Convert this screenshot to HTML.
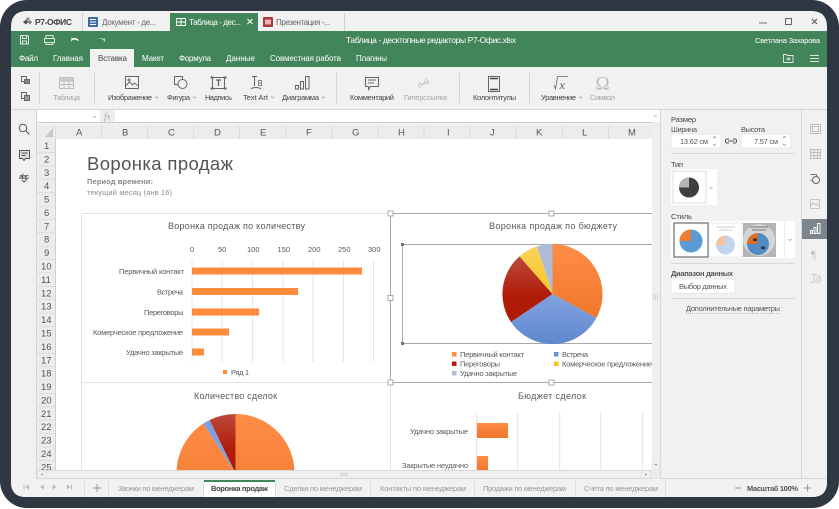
<!DOCTYPE html>
<html><head><meta charset="utf-8"><style>
html,body{margin:0;padding:0;width:839px;height:509px;background:#fff;overflow:hidden}
svg{display:block;filter:blur(.38px)}
text{font-family:"Liberation Sans",sans-serif;font-size:8px;fill:#444}
.w{fill:#fff}.g{fill:#a5a5a5}.c{fill:#595959}.s{fill:#8c8c8c}
.ic{fill:none;stroke:#666;stroke-width:1}
</style></head><body>
<svg width="839" height="509" viewBox="0 0 839 509" xmlns="http://www.w3.org/2000/svg">
<defs>
<clipPath id="win"><path d="M27 11H811Q827 11 827 27V482Q827 497 812 497H26Q11 497 11 482V27Q11 11 27 11Z"/></clipPath>
<clipPath id="sheet"><rect x="37" y="139" width="615" height="331"/></clipPath>
<linearGradient id="or" x1="0" y1="0" x2="0" y2="1"><stop offset="0" stop-color="#ff8d47"/><stop offset="1" stop-color="#f0762a"/></linearGradient>
<linearGradient id="bl" x1="0" y1="0" x2="0" y2="1"><stop offset="0" stop-color="#82a3e0"/><stop offset="1" stop-color="#5f88cf"/></linearGradient>
<linearGradient id="rd" x1="0" y1="0" x2="0" y2="1"><stop offset="0" stop-color="#bd4a3e"/><stop offset=".6" stop-color="#b01c08"/><stop offset="1" stop-color="#ad1a06"/></linearGradient>
<linearGradient id="yl" x1="0" y1="0" x2="0" y2="1"><stop offset="0" stop-color="#fad35c"/><stop offset="1" stop-color="#f9c51c"/></linearGradient>
</defs>
<rect width="839" height="509" fill="#fff"/>
<rect x="0" y="0" width="839" height="508" rx="27" fill="#2f3742"/>
<g clip-path="url(#win)">
<rect x="11" y="11" width="816" height="486" fill="#f1f1f1"/>
<!-- title bar -->
<g fill="#555"><path d="M26 19.500l2.500 2.500-2.500 2.500-3-2.500z"/><path d="M30 20l2 2-2 2.500-2-2.500z" fill="#777"/><path d="M28 17l2 2-2 2-2-2z" fill="#888"/></g>
<text x="35" y="25" textLength="37" style="font-weight:bold;font-size:8.500px" fill="#444">Р7-ОФИС</text>
<path d="M82.500 13v18M344.500 13v18" stroke="#d0d0d0"/>
<rect x="88" y="17" width="10" height="10" rx="1" fill="#3e6aa6"/><path d="M90 19.500h6M90 22h6M90 24.500h6" stroke="#fff"/>
<text x="102" y="25" textLength="54" style="fill:#666">Документ - де...</text>
<rect x="170" y="13" width="88" height="18" fill="#43855a"/>
<path d="M176.500 18.500h9v7h-9zM176.500 22h9M181 18.500v7" fill="none" stroke="#fff" stroke-width=".9"/>
<text x="189" y="25" textLength="52" class="w">Таблица - дес...</text>
<path d="M247.500 19l5 5M252.500 19l-5 5" stroke="#fff"/>
<rect x="263" y="17" width="10" height="10" rx="1" fill="#a83a3a"/><rect x="265" y="19.500" width="6" height="5" fill="#e8b8b8"/>
<text x="276" y="25" textLength="54" style="fill:#666">Презентация -...</text>
<path d="M759 23h8" stroke="#777"/><rect x="785.500" y="18.500" width="6" height="6" fill="none" stroke="#666"/><path d="M812 19l5 5M817 19l-5 5" stroke="#555"/>
<!-- green -->
<rect x="11" y="31" width="816" height="36" fill="#43855a"/>
<g fill="none" stroke="#d9e8de">
<path d="M20.500 35.500h7l1 1v7.500h-8zM22.500 35.500v3h4v-3M22.500 44v-3h4v3"/>
<path d="M46 38v-2.500h7V38M44.500 38.500h10v4h-10zM46 42v2.500h7V42"/>
</g>
<path d="M71 42c1-3 5-3 7-1l1-.5c-2-3-5-3-6-2l-1.500-1z" fill="#fff"/>
<path d="M104 41c-1-2-4-3-7-2 2-1 5-1 7 0l1-1v4z" fill="#cfe2d6"/>
<text x="346" y="43" textLength="170" class="w" style="font-size:8.500px">Таблица - десктопные редакторы Р7-Офис.xlsx</text>
<text x="755" y="43" textLength="65" class="w" style="font-size:7.500px">Светлана Захарова</text>
<g class="w">
<text x="19" y="61" textLength="19" class="w">Файл</text>
<text x="53" y="61" textLength="30" class="w">Главная</text>
<text x="142" y="61" textLength="22" class="w">Макет</text>
<text x="179" y="61" textLength="32" class="w">Формула</text>
<text x="226" y="61" textLength="29" class="w">Данные</text>
<text x="270" y="61" textLength="71" class="w">Совместная работа</text>
<text x="356" y="61" textLength="31" class="w">Плагины</text>
</g>
<rect x="90" y="49" width="44" height="18" fill="#f1f1f1"/>
<text x="98" y="61" textLength="29" style="fill:#444">Вставка</text>
<path d="M783.500 54.500h3l1 1h5.500v7h-9.500zM786 59h4M788.500 57.500l1.500 1.500-1.500 1.500" fill="none" stroke="#dcebe1" stroke-width=".9"/>
<path d="M810 55.500h9M810 58.500h9M810 61.500h9" stroke="#dcebe1"/>
<!-- toolbar -->
<rect x="11" y="67" width="816" height="42" fill="#f1f1f1"/>
<path d="M11 109.500H827" stroke="#d4d4d4"/>
<path d="M39.500 73v30M94.500 73v30M336.500 73v30M459.500 73v30M529.500 73v30" stroke="#d5d5d5"/>
<g fill="none" stroke="#666">
<path d="M21.500 76.500h5v5h-5z"/><path d="M24.500 79.500h5v4h-5z" fill="#888"/>
<path d="M21.500 92.500h5v6h-5z"/><path d="M24.500 95.500h5v5h-5z" fill="#999"/>
</g>
<g fill="none" stroke="#bbb"><path d="M59.500 77.500h14v11h-14zM59.500 81h14M59.500 84.500h14M64 81v7.500M69 81v7.500"/></g>
<path d="M59.500 77.500h14v3h-14z" fill="#ccc"/>
<text x="53" y="100" textLength="27" class="g" style="font-size:7.500px">Таблица</text>
<g class="ic">
<path d="M125.500 76.500h13v12h-13zM125.500 86l4-4 3 3 2-2 4 3"/><circle cx="129" cy="80" r="1"/>
<path d="M174.500 76.500h8v6M174.500 76.500v8h4"/><circle cx="182.500" cy="84" r="4.500" fill="#f1f1f1"/>
<path d="M212.500 77.500h12v11h-12z"/>
<path d="M216 80h5M218.500 80v6" stroke-width="1.300"/>
<path d="M252 76.500h5M254.500 76.500v9.500M251 89c2-2 8-2 10 0"/><path d="M258.500 80.500h3v5h-3zM258.500 83h3" stroke-width=".8"/>
<path d="M295.500 85.500h3v3.500h-3zM300.500 81.500h3v7.500h-3zM305.500 76.500h3.500v12.500h-3.500z"/>
<path d="M365.500 77.500h13v9h-8l-2 3v-3h-3zM368 80h8M368 83h6"/>
<path d="M488.500 76.500h11v15h-11z"/>
</g>
<path d="M210.500 76.500h3v2h-3zM223.500 76.500h3v2h-3zM210.500 87.500h3v2h-3zM223.500 87.500h3v2h-3z" fill="#666"/>
<path d="M490 78.500h8M490 89.500h8" stroke="#444" stroke-width="1.600"/>
<path d="M421 88l-2-2c-1-1 0-3 1-3l3 3M425 78l3 3c1 1 0 2-1 3l-3-3M422 85l4-4" fill="none" stroke="#c4c4c4"/>
<text x="559.500" y="89" style="font-family:'Liberation Serif',serif;font-size:12px;font-style:italic;fill:#555">x</text>
<path d="M554 85l1.500 4 2-12.500h10.500" fill="none" stroke="#666" stroke-width=".8"/>
<text x="595.500" y="89.500" textLength="15" style="font-family:'Liberation Serif',serif;font-size:19px;fill:#bbb">Ω</text>
<text x="108" y="100" textLength="44" style="font-size:7.500px">Изображение</text>
<text x="167" y="100" textLength="23" style="font-size:7.500px">Фигура</text>
<text x="205" y="100" textLength="27" style="font-size:7.500px">Надпись</text>
<text x="243" y="100" textLength="25" style="font-size:7.500px">Text Art</text>
<text x="282" y="100" textLength="37" style="font-size:7.500px">Диаграмма</text>
<text x="350" y="100" textLength="44" style="font-size:7.500px">Комментарий</text>
<text x="404" y="100" textLength="43" class="g" style="font-size:7.500px">Гиперссылка</text>
<text x="473" y="100" textLength="43" style="font-size:7.500px">Колонтитулы</text>
<text x="541" y="100" textLength="35" style="font-size:7.500px">Уравнение</text>
<text x="590" y="100" textLength="25" class="g" style="font-size:7.500px">Символ</text>
<path d="M155 96.500l1.500 1.500 1.500-1.500M193 96.500l1.500 1.500 1.500-1.500M271 96.500l1.500 1.500 1.500-1.500M322 96.500l1.500 1.500 1.500-1.500M579 96.500l1.500 1.500 1.500-1.500" fill="none" stroke="#999" stroke-width=".7"/>
<!-- formula -->
<rect x="37" y="110" width="623" height="12" fill="#fff"/>
<rect x="100" y="110" width="15" height="12" fill="#ececec"/>
<text x="104" y="119.500" style="font-family:'Liberation Serif',serif;font-style:italic;font-size:9px;fill:#aaa">fx</text>
<path d="M93 116l1.500 1.500 1.500-1.500M654 115l1.500 1.500 1.500-1.500" fill="none" stroke="#aaa" stroke-width=".7"/>
<rect x="37" y="122" width="623" height="4" fill="#efefef"/>
<path d="M37 122.500h623" stroke="#cfcfcf"/>
<!-- sidebar left -->
<path d="M36.500 109v370" stroke="#d4d4d4"/>
<g fill="none" stroke="#555"><circle cx="23" cy="128" r="3.700"/><path d="M26 131l3.500 3.500" stroke-width="1.100"/></g>
<path d="M19.500 150.500h10v8h-4l-1.500 2-1.500-2h-3z" fill="#ddd" stroke="#555"/><path d="M21.500 153h6M21.500 155.500h4" stroke="#555"/>
<text x="19" y="179" textLength="10" style="font-size:7px;font-weight:bold;fill:#555">abc</text><path d="M22 180l2 2 3-3" fill="none" stroke="#555"/>
<!-- col headers -->
<rect x="37" y="126" width="615" height="13" fill="#ececec"/>
<path d="M37 139.500h615" stroke="#d8d8d8"/>
<path d="M53 128v9h-8z" fill="#c9c9c9"/>
<path d="M55.500 126v13M101.500 126v13M147.500 126v13M193.500 126v13M239.500 126v13M286 126v13M332 126v13M378 126v13M424 126v13M470 126v13M516 126v13M562.500 126v13M608.500 126v13" stroke="#dcdcdc"/>
<text x="76" y="135.500" style="font-size:9.500px;fill:#555">A</text><text x="122" y="135.500" style="font-size:9.500px;fill:#555">B</text><text x="168" y="135.500" style="font-size:9.500px;fill:#555">C</text><text x="214" y="135.500" style="font-size:9.500px;fill:#555">D</text><text x="260" y="135.500" style="font-size:9.500px;fill:#555">E</text><text x="306" y="135.500" style="font-size:9.500px;fill:#555">F</text><text x="352" y="135.500" style="font-size:9.500px;fill:#555">G</text><text x="398" y="135.500" style="font-size:9.500px;fill:#555">H</text><text x="447" y="135.500" style="font-size:9.500px;fill:#555">I</text><text x="490" y="135.500" style="font-size:9.500px;fill:#555">J</text><text x="536" y="135.500" style="font-size:9.500px;fill:#555">K</text><text x="582" y="135.500" style="font-size:9.500px;fill:#555">L</text><text x="628" y="135.500" style="font-size:9.500px;fill:#555">M</text>
<!-- sheet -->
<g clip-path="url(#sheet)">
<rect x="55" y="139" width="597" height="331" fill="#fff"/>
<rect x="37" y="139" width="18.500" height="331" fill="#ececec"/>
<path d="M55.500 139v331" stroke="#d0d0d0"/>
<path d="M37 152.400h18M37 165.800h18M37 179.200h18M37 192.600h18M37 206h18M37 219.300h18M37 232.700h18M37 246.100h18M37 259.500h18M37 272.900h18M37 286.300h18M37 299.700h18M37 313.100h18M37 326.500h18M37 339.900h18M37 353.300h18M37 366.600h18M37 380h18M37 393.400h18M37 406.800h18M37 420.200h18M37 433.600h18M37 447h18M37 460.400h18" stroke="#dadada" stroke-width=".8"/>
<text x="44" y="149" style="font-size:9.500px;fill:#555">1</text><text x="44" y="162.400" style="font-size:9.500px;fill:#555">2</text><text x="44" y="175.800" style="font-size:9.500px;fill:#555">3</text><text x="44" y="189.200" style="font-size:9.500px;fill:#555">4</text><text x="44" y="202.600" style="font-size:9.500px;fill:#555">5</text><text x="44" y="216" style="font-size:9.500px;fill:#555">6</text><text x="44" y="229.400" style="font-size:9.500px;fill:#555">7</text><text x="44" y="242.700" style="font-size:9.500px;fill:#555">8</text><text x="44" y="256.100" style="font-size:9.500px;fill:#555">9</text>
<text x="41" y="269.500" style="font-size:9.500px;fill:#555">10</text><text x="41" y="282.900" style="font-size:9.500px;fill:#555">11</text><text x="41" y="296.300" style="font-size:9.500px;fill:#555">12</text><text x="41" y="309.700" style="font-size:9.500px;fill:#555">13</text><text x="41" y="323.100" style="font-size:9.500px;fill:#555">14</text><text x="41" y="336.500" style="font-size:9.500px;fill:#555">15</text><text x="41" y="349.900" style="font-size:9.500px;fill:#555">16</text><text x="41" y="363.300" style="font-size:9.500px;fill:#555">17</text><text x="41" y="376.600" style="font-size:9.500px;fill:#555">18</text><text x="41" y="390" style="font-size:9.500px;fill:#555">19</text><text x="41" y="403.400" style="font-size:9.500px;fill:#555">20</text><text x="41" y="416.800" style="font-size:9.500px;fill:#555">21</text><text x="41" y="430.200" style="font-size:9.500px;fill:#555">22</text><text x="41" y="443.600" style="font-size:9.500px;fill:#555">23</text><text x="41" y="457" style="font-size:9.500px;fill:#555">24</text><text x="41" y="470.400" style="font-size:9.500px;fill:#555">25</text>
<text x="87" y="170" textLength="146" style="font-size:18.500px;fill:#555">Воронка продаж</text>
<text x="87" y="184" textLength="66" style="font-size:7.500px;font-weight:bold;fill:#888">Период времени:</text>
<text x="87" y="195" textLength="85" style="font-size:7.500px;fill:#8c8c8c">текущий месяц (янв 16)</text>
<!-- chart borders -->
<path d="M81.500 470V213.500H390M81.500 382.500H652M390.500 382v88" fill="none" stroke="#e3e3e3"/>
<!-- chart 1 -->
<text x="168" y="229" textLength="137" style="font-size:9px;fill:#595959">Воронка продаж по количеству</text>
<text x="190" y="252" class="c" style="font-size:7.500px">0</text><text x="218" y="252" class="c" style="font-size:7.500px">50</text><text x="247" y="252" class="c" style="font-size:7.500px">100</text><text x="277.500" y="252" class="c" style="font-size:7.500px">150</text><text x="308" y="252" class="c" style="font-size:7.500px">200</text><text x="338" y="252" class="c" style="font-size:7.500px">250</text><text x="368" y="252" class="c" style="font-size:7.500px">300</text>
<path d="M192 261v101M222 261v101M252.500 261v101M283 261v101M313 261v101M343.500 261v101M373.500 261v101" stroke="#e6e6e6"/>
<rect x="192" y="267.500" width="170" height="7" fill="#fe8a3c"/>
<rect x="192" y="288" width="106" height="7" fill="#fe8a3c"/>
<rect x="192" y="308.500" width="67" height="7" fill="#fe8a3c"/>
<rect x="192" y="328.500" width="37" height="7" fill="#fe8a3c"/>
<rect x="192" y="348.500" width="12" height="7" fill="#fe8a3c"/>
<text x="119" y="274" textLength="65" class="c" style="font-size:7.500px">Первичный контакт</text>
<text x="157" y="294.500" textLength="26" class="c" style="font-size:7.500px">Встреча</text>
<text x="144" y="315" textLength="39.500" class="c" style="font-size:7.500px">Переговоры</text>
<text x="93" y="335" textLength="90" class="c" style="font-size:7.500px">Комерческое предложение</text>
<text x="126" y="355" textLength="57" class="c" style="font-size:7.500px">Удачно закрытые</text>
<rect x="223" y="370" width="4" height="4" fill="#fe8a3c"/>
<text x="231" y="375" textLength="18" class="c" style="font-size:7.500px">Ряд 1</text>
<!-- chart 2 -->
<text x="489" y="229" textLength="128" style="font-size:9px;fill:#595959">Воронка продаж по бюджету</text>
<path d="M652 244.500H402.500V343.500H652" fill="none" stroke="#a8a8a8"/>
<path d="M552.500 294V244A50 50 0 0 1 596.400 317.900Z" fill="url(#or)"/>
<path d="M552.500 294L596.400 317.900A50 50 0 0 1 511 322Z" fill="url(#bl)"/>
<path d="M552.500 294L511 322A50 50 0 0 1 519.500 256.400Z" fill="url(#rd)"/>
<path d="M552.500 294L519.500 256.400A50 50 0 0 1 537 246.400Z" fill="url(#yl)"/>
<path d="M552.500 294L537 246.400A50 50 0 0 1 552.500 244Z" fill="#aebcd8"/>
<rect x="452" y="352" width="4.500" height="4.500" fill="#fe8a3c"/><rect x="554" y="352" width="4.500" height="4.500" fill="#6a90d4"/>
<rect x="452" y="361.500" width="4.500" height="4.500" fill="#b01c08"/><rect x="554" y="361.500" width="4.500" height="4.500" fill="#f9c51c"/>
<rect x="452" y="371" width="4.500" height="4.500" fill="#aebcd8"/>
<text x="460" y="357" textLength="64" class="c" style="font-size:7.500px">Первичный контакт</text>
<text x="562" y="357" textLength="26" class="c" style="font-size:7.500px">Встреча</text>
<text x="460" y="366.500" textLength="40" class="c" style="font-size:7.500px">Переговоры</text>
<text x="562" y="366.500" textLength="90" class="c" style="font-size:7.500px">Комерческое предложение</text>
<text x="460" y="376" textLength="57" class="c" style="font-size:7.500px">Удачно закрытые</text>
<path d="M390.500 213.500H652M390.500 213.500V382.500M390.500 382.500H652" fill="none" stroke="#a8a8a8"/>
<!-- chart 3 -->
<text x="194" y="399" textLength="83" style="font-size:9px;fill:#595959">Количество сделок</text>
<path d="M235.500 473L203.400 423.500A59 59 0 1 0 235.500 414Z" fill="url(#or)"/>
<path d="M235.500 473L203.400 423.500A59 59 0 0 1 209.600 420Z" fill="#7fa0e0"/>
<path d="M235.500 473L209.600 420A59 59 0 0 1 235.500 414Z" fill="url(#rd)"/>
<!-- chart 4 -->
<text x="518" y="399" textLength="68" style="font-size:9px;fill:#595959">Бюджет сделок</text>
<path d="M476.700 413v57M517.700 413v57M559.700 413v57M600.700 413v57M642.700 413v57" stroke="#e3e3e3"/>
<rect x="477" y="423" width="31" height="15" fill="url(#or)"/>
<rect x="477" y="456" width="11" height="15" fill="url(#or)"/>
<text x="410" y="434" textLength="58" class="c" style="font-size:7.500px">Удачно закрытые</text>
<text x="402" y="468" textLength="66" class="c" style="font-size:7.500px">Закрытые неудачно</text>
<!-- handles -->
<g fill="#fff" stroke="#999" stroke-width=".8">
<rect x="388" y="211" width="5" height="5"/><rect x="549" y="211" width="5" height="5"/><rect x="388" y="295.500" width="5" height="5"/><rect x="388" y="380" width="5" height="5"/><rect x="549" y="380" width="5" height="5"/>
</g>
<rect x="401" y="243" width="3" height="3" fill="#777"/><rect x="401" y="342" width="3" height="3" fill="#777"/>
</g>
<!-- scrollbars -->
<rect x="37" y="470" width="623" height="9" fill="#ececec"/>
<path d="M37 470.500h615M37 478.500h790" stroke="#d8d8d8"/>
<rect x="38" y="471" width="7" height="7" fill="#f3f3f3" stroke="#ddd" stroke-width=".5"/>
<rect x="642" y="471" width="8" height="7" fill="#f3f3f3" stroke="#ddd" stroke-width=".5"/>
<rect x="47" y="471" width="594" height="7" fill="#efefef"/>
<path d="M340 473.500h8M340 475.500h8" stroke="#cfcfcf"/>
<path d="M42.500 473l-2 1.500 2 1.500zM645 473l2 1.500-2 1.500z" fill="#999"/>
<rect x="652" y="122" width="8" height="357" fill="#ececec"/>
<rect x="652.500" y="127" width="7" height="333" fill="#efefef"/>
<path d="M653.500 294v6M655.500 294v6M657.500 294v6" stroke="#d4d4d4"/>
<rect x="652.500" y="461" width="7" height="8" fill="#f3f3f3" stroke="#ddd" stroke-width=".5"/>
<path d="M654 464l2 2 2-2z" fill="#aaa"/>
<!-- right panel -->
<path d="M660.500 110v369M801.500 110v369" stroke="#d8d8d8"/>
<text x="671" y="122" textLength="25" style="font-size:7.500px">Размер</text>
<text x="671" y="132" textLength="26" style="font-size:7.500px;fill:#555">Ширина</text>
<text x="741" y="132" textLength="24" style="font-size:7.500px;fill:#555">Высота</text>
<rect x="671" y="134" width="50" height="14" fill="#fff" stroke="#e0e0e0" stroke-width=".7"/>
<rect x="741" y="134" width="50" height="14" fill="#fff" stroke="#e0e0e0" stroke-width=".7"/>
<text x="680" y="144" textLength="28" style="font-size:7.500px;fill:#555">13.62 см</text>
<text x="754" y="144" textLength="24" style="font-size:7.500px;fill:#555">7.57 см</text>
<path d="M713 138l1.500-1.500 1.500 1.500M713 144l1.500 1.500 1.500-1.500M783 138l1.500-1.500 1.500 1.500M783 144l1.500 1.500 1.500-1.500" fill="none" stroke="#888" stroke-width=".7"/>
<path d="M729 139h-2c-2 0-2 4 0 4h2M733 139h2c2 0 2 4 0 4h-2M728 141h6" fill="none" stroke="#555"/>
<path d="M671 153.500h124M671 263.500h124M671 298.500h124" stroke="#d8d8d8"/>
<text x="671" y="167" textLength="12" style="font-size:7.500px">Тип</text>
<rect x="671" y="169" width="46" height="36" fill="#fff"/>
<rect x="673" y="171" width="33" height="32" fill="#fff" stroke="#cfcfcf" stroke-width=".7"/>
<circle cx="689" cy="187.500" r="10" fill="#3f3f3f"/><path d="M689 187.500V177.500A10 10 0 0 0 679 187.500Z" fill="#b5b5b5"/>
<path d="M709.500 187l1.500 1.500 1.500-1.500" fill="none" stroke="#999" stroke-width=".7"/>
<text x="671" y="219" textLength="21" style="font-size:7.500px">Стиль</text>
<rect x="671" y="221" width="124" height="37" fill="#fff"/>
<rect x="674" y="223" width="34" height="34" fill="#fff" stroke="#7a8087" stroke-width="1.400"/>
<circle cx="691" cy="241" r="11.500" fill="#5b9bd5"/><path d="M691 241V229.500A11.500 11.500 0 0 0 679.500 241Z" fill="#ed7d31"/>
<rect x="709" y="223" width="33" height="34" fill="#fff" stroke="#ddd" stroke-width=".6"/>
<path d="M716 227h19M719 230h13" stroke="#ccc"/>
<circle cx="725.500" cy="245" r="9.500" fill="#bfd6ee"/><path d="M725.500 245V235.500A9.500 9.500 0 0 0 716 245Z" fill="#f6c3a2"/>
<rect x="743" y="223" width="33" height="34" fill="#b5b5b5"/>
<circle cx="759" cy="240" r="16" fill="#d5d5d5"/>
<path d="M750 227h18M752 230h14" stroke="#777"/>
<circle cx="758" cy="244" r="11" fill="#4f8cc6"/><path d="M758 244V233A11 11 0 0 0 747 244Z" fill="#d96f28"/>
<rect x="753" y="238.500" width="4" height="2.500" fill="#333"/><rect x="761" y="246.500" width="4" height="2.500" fill="#333"/>
<path d="M784.500 221v37" stroke="#eee"/><path d="M788.500 239l1.500 1.500 1.500-1.500" fill="none" stroke="#999" stroke-width=".7"/>
<text x="671" y="276" textLength="62" style="font-size:7.500px;font-weight:bold;fill:#555">Диапазон данных</text>
<rect x="671" y="279" width="64" height="14" fill="#fff" stroke="#e0e0e0" stroke-width=".5"/>
<text x="679" y="289" textLength="48" style="font-size:7.500px;fill:#555">Выбор данных</text>
<text x="686" y="311" textLength="94" style="font-size:7.500px;fill:#555">Дополнительные параметры</text>
<path d="M686 313.500h94" stroke="#aaa" stroke-dasharray="1 1" stroke-width=".7"/>
<!-- right bar -->
<g fill="none" stroke="#bdbdbd">
<path d="M810.500 124.500h10v9h-10z"/><path d="M812.500 126.500h6v5h-6z"/>
<path d="M810.500 149.500h10v9h-10zM810.500 152.500h10M810.500 155.500h10M814 149.500v9M817.500 149.500v9"/>
</g>
<path d="M810.500 174.500h6v6h-6" fill="none" stroke="#777"/><circle cx="816" cy="180" r="3.500" fill="#f1f1f1" stroke="#666"/>
<g fill="none" stroke="#c6c6c6"><path d="M810.500 199.500h9v9h-9zM810.500 206l3-3 2 2 1.500-1 2.500 2"/></g>
<rect x="802" y="219" width="25" height="20" fill="#7d858c"/>
<path d="M810.500 230.500h2v3h-2zM814 227.500h2v6h-2zM817.500 223.500h2.500v10h-2.500z" fill="none" stroke="#fff" stroke-width=".9"/>
<text x="811" y="258" style="font-size:11px;fill:#bdbdbd;font-family:'Liberation Serif',serif">¶</text>
<text x="811" y="281" style="font-size:10px;fill:#c6c6c6">Ta</text><path d="M810 283c2-1.500 8-1.500 10 0" fill="none" stroke="#c6c6c6"/>
<!-- bottom bar -->
<rect x="11" y="479" width="816" height="18" fill="#f1f1f1"/>
<path d="M29 484.500l-3.500 2.500 3.500 2.500zM44 484.500l-4 2.500 4 2.500zM52.500 484.500l4 2.500-4 2.500zM67 484.500l3.500 2.500-3.500 2.500z" fill="#bbb"/>
<path d="M24 484.500v5M71.500 484.500v5" stroke="#bbb"/>
<path d="M84.500 481v16M108.500 481v16M203.500 481v16M275.500 481v16M370.500 481v16M474.500 481v16M575.500 481v16M665.500 481v16" stroke="#dcdcdc"/>
<path d="M93 488h8M97 484v8" stroke="#999"/>
<text x="118" y="491" textLength="76" style="font-size:7.500px;fill:#999">Звонки по менеджерам</text>
<rect x="204" y="480" width="71" height="17" fill="#fff"/><rect x="204" y="480" width="71" height="2" fill="#43855a"/>
<text x="211" y="491" textLength="57" style="font-size:7.500px;font-weight:bold;fill:#444">Воронка продаж</text>
<text x="284" y="491" textLength="78" style="font-size:7.500px;fill:#999">Сделки по менеджерам</text>
<text x="380" y="491" textLength="86" style="font-size:7.500px;fill:#999">Контакты по менеджерам</text>
<text x="483" y="491" textLength="83" style="font-size:7.500px;fill:#999">Продажи по менеджерам</text>
<text x="584" y="491" textLength="74" style="font-size:7.500px;fill:#999">Счета по менеджерам</text>
<path d="M735 488h6M804 488h7M807.500 484.500v7" stroke="#999"/>
<text x="747" y="491" textLength="51" style="font-size:7.500px;font-weight:bold;fill:#555">Масштаб 100%</text>
</g>
</svg>
</body></html>
